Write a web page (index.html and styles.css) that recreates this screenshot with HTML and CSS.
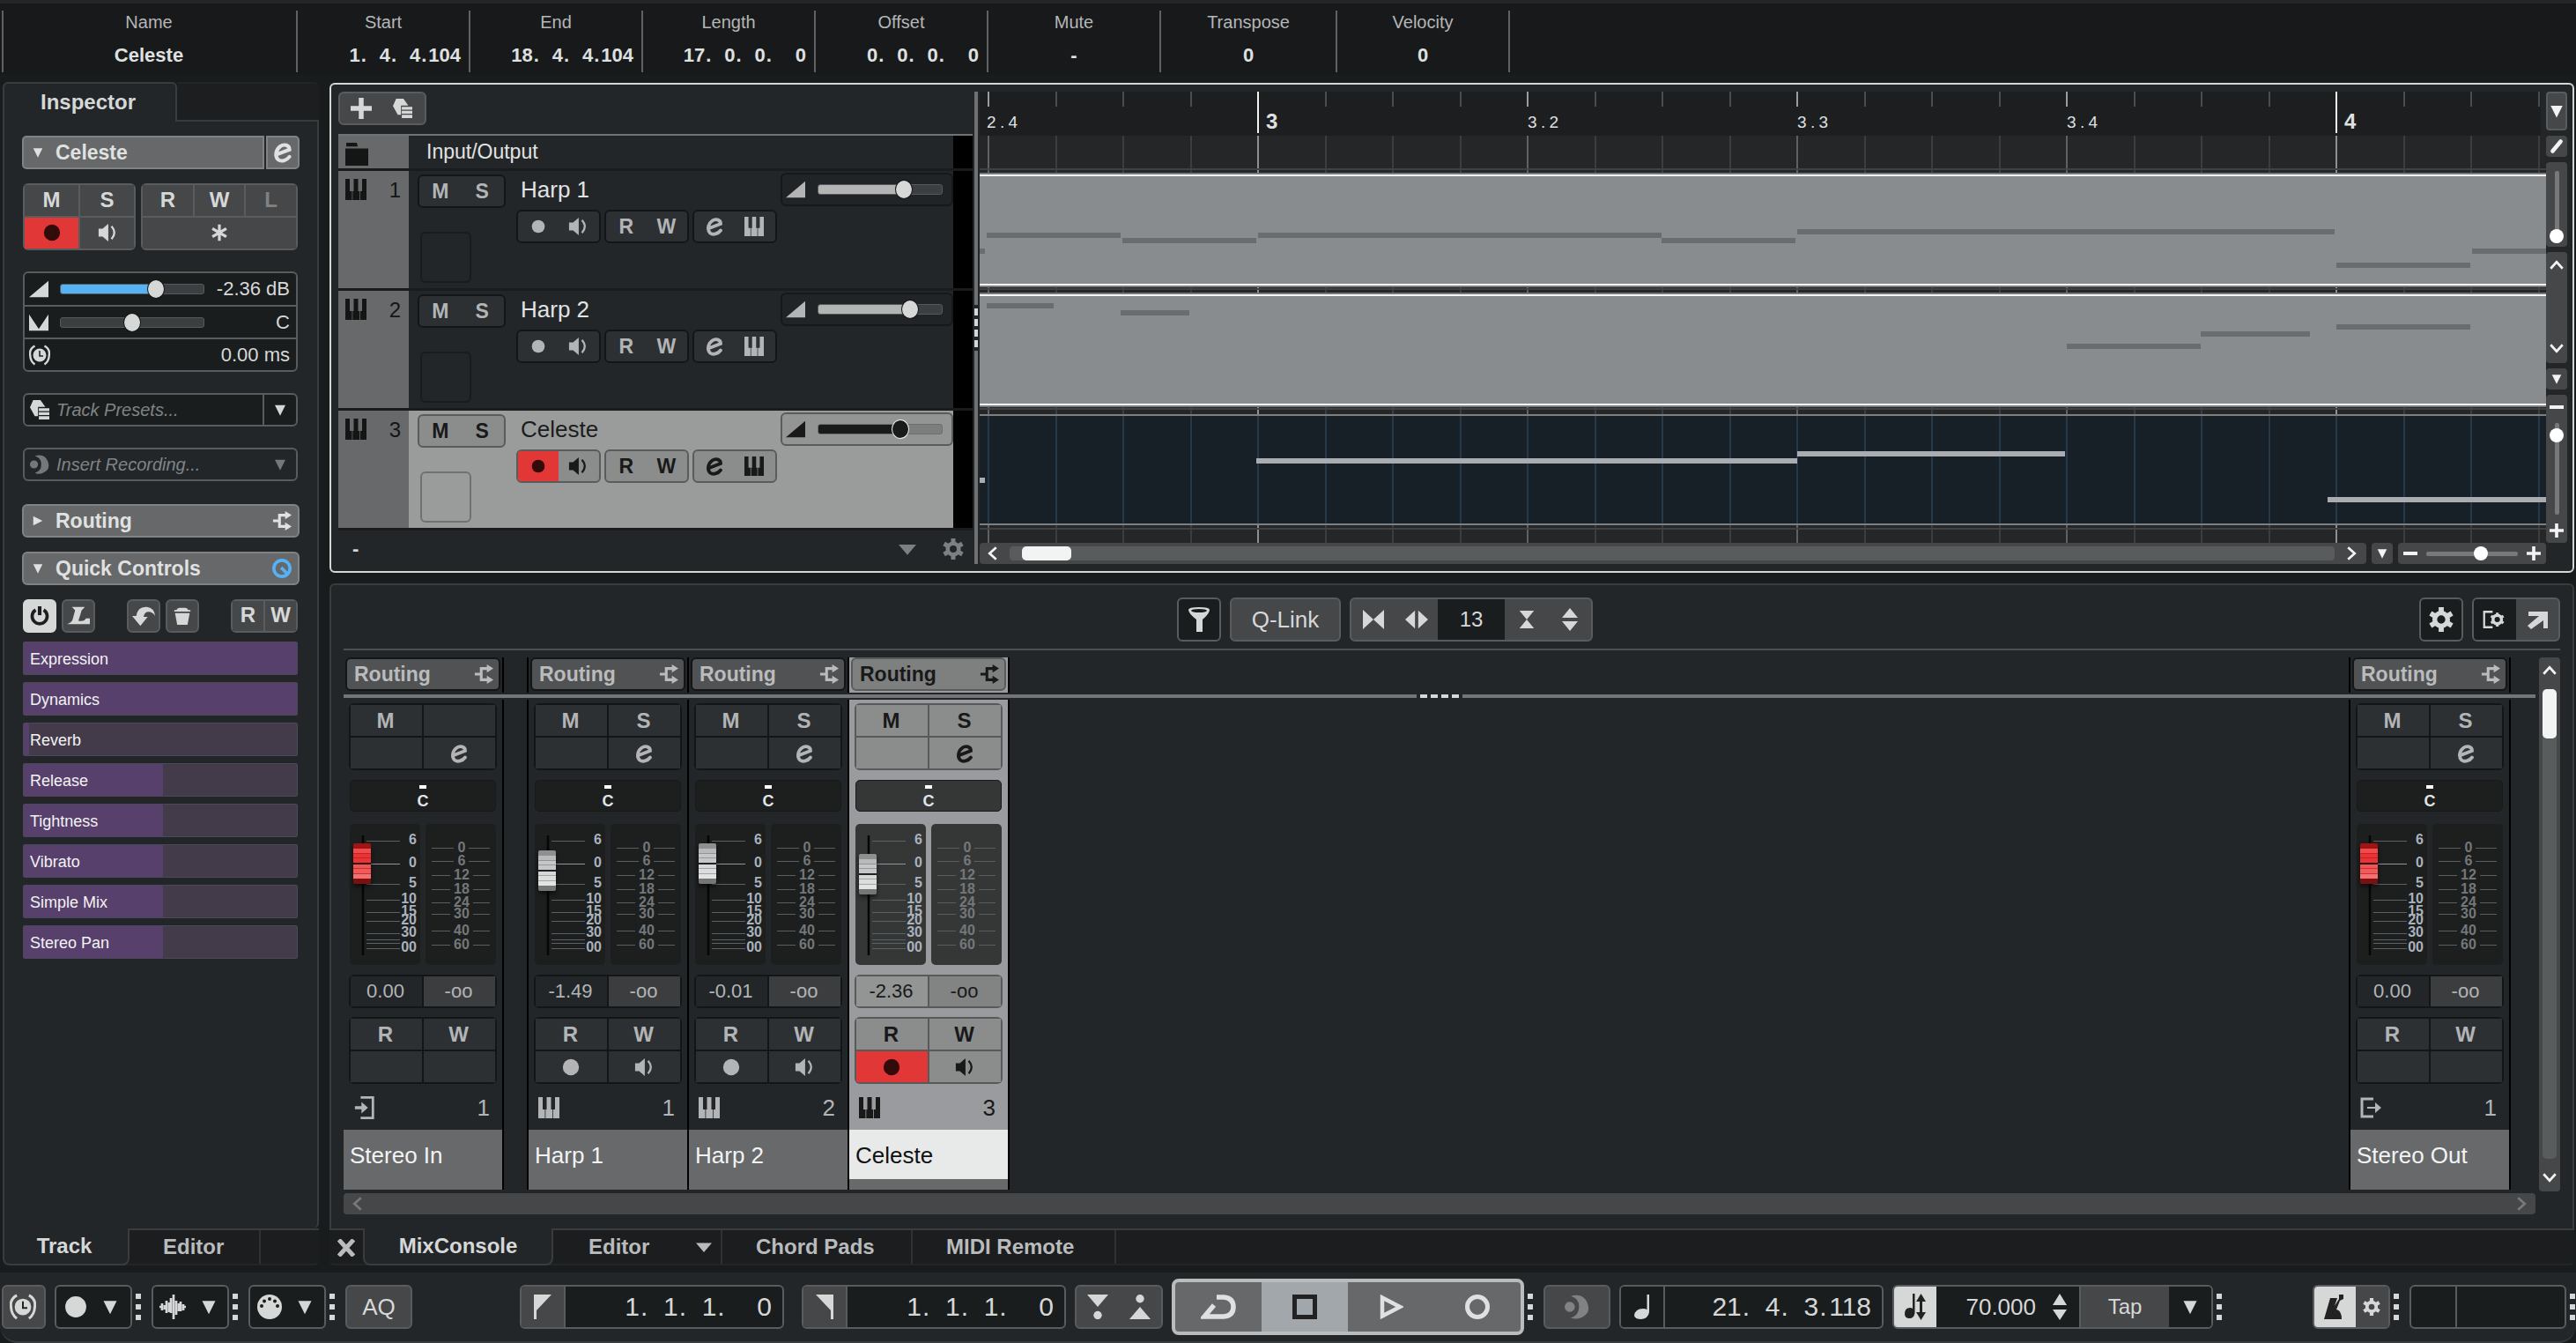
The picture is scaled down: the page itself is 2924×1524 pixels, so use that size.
FILE: index.html
```html
<!DOCTYPE html>
<html lang="en">
<head>
<meta charset="utf-8">
<title>Project</title>
<link rel="stylesheet" href="styles.css">
</head>
<body>
<svg class="sprite" aria-hidden="true">
  <symbol id="down" viewBox="0 0 24 24"><path d="M3 4h18L12 22z"/></symbol>
  <symbol id="flat" viewBox="0 0 24 24"><path d="M0 6h24L12 20z"/></symbol>
  <symbol id="right" viewBox="0 0 24 24"><path d="M3 3v18l18-9z"/></symbol>
  <symbol id="edit" viewBox="0 0 24 24"><path d="M6 14 19 9C19 4 13 3 9.500 5.500 4.500 9 3.500 16 7 19.500 10.500 22 16 20.500 19 16.500" fill="none" stroke="currentColor" stroke-width="3.800" stroke-linecap="round"/></symbol>
  <symbol id="keys" viewBox="0 0 24 24"><path d="M0 0h5v14h2.500v10H0zM9.500 0h5v14h1.500v10H8.300V14h1.200zM19 0h5v24h-7.200V14H19z"/></symbol>
  <symbol id="speaker" viewBox="0 0 24 24"><path d="M1 7h5l7-6v22l-7-6H1z"/><path d="M17 4q7 8 0 16" fill="none" stroke="currentColor" stroke-width="2.500"/></symbol>
  <symbol id="dot" viewBox="0 0 24 24"><circle cx="12" cy="12" r="11"/></symbol>
  <symbol id="route" viewBox="0 0 24 24"><path d="M1 12h7M18 5H9v14h9" fill="none" stroke="currentColor" stroke-width="3.400"/><path d="M16 0l8 5-8 5zM16 14l8 5-8 5z"/></symbol>
  <symbol id="gear" viewBox="0 0 24 24"><circle cx="12" cy="12" r="6.300" fill="none" stroke="currentColor" stroke-width="4.600"/><path d="M12 0v5M12 19v5M1.600 6l4.300 2.500M18.100 15.500l4.300 2.500M1.600 18l4.300-2.500M18.100 8.500 22.400 6" stroke="currentColor" stroke-width="5"/></symbol>
  <symbol id="fade" viewBox="0 0 24 24"><path d="M0 22 24 2v20z"/></symbol>
  <symbol id="pan" viewBox="0 0 24 24"><path d="M0 2l12 18L24 2v20H0z"/></symbol>
  <symbol id="clock" viewBox="0 0 24 24"><circle cx="12" cy="12" r="7.500"/><path d="M12 7v6h4" fill="none" stroke="#222" stroke-width="1.600"/><path d="M6.500 1.500Q0 5 1.200 12 1.500 19 6.500 22.500M17.500 1.500Q24 5 22.800 12 22.500 19 17.500 22.500" fill="none" stroke="currentColor" stroke-width="2.400"/></symbol>
  <symbol id="preset" viewBox="0 0 24 24"><path d="M4 0h9l6 8.500H10V20H6L0 9z"/><path d="M11 10h13v3.600H11zM11 15h13v3.600H11zM11 20h13v4H11z"/></symbol>
  <symbol id="moon" viewBox="0 0 24 24"><circle cx="5" cy="12" r="5"/><path d="M6 1.500Q18-2 22 8t-5 14q-6 3-11 .5 8-2 8-10.500T6 1.500z"/></symbol>
  <symbol id="star" viewBox="0 0 24 24"><path d="M12 1v22M2.500 6.500l19 11M21.500 6.500l-19 11" stroke="currentColor" stroke-width="3.800"/></symbol>
  <symbol id="power" viewBox="0 0 24 24"><path d="M7 4.500A9.300 9.300 0 1 0 17 4.500" fill="none" stroke="currentColor" stroke-width="4"/><path d="M12 0v11" stroke="currentColor" stroke-width="4.500"/></symbol>
  <symbol id="learn" viewBox="0 0 28 24"><path d="M6 1h16l-4 4-4 13q8 1 9-3h5v7H0q6-2 7-6l3-11z"/></symbol>
  <symbol id="undo" viewBox="0 0 28 24"><path d="M0 12h5Q7 0 18 1q9 1 10 11-3-5-8-5-5 0-6 6h5l-9 11z"/></symbol>
  <symbol id="trash" viewBox="0 0 24 24"><path d="M1 4h3q1-3 4-3h8q3 0 4 3h3v2H1zM2 8h20l-3 16H5z"/></symbol>
  <symbol id="plus" viewBox="0 0 24 24"><path d="M12 0v24M0 12h24" stroke="currentColor" stroke-width="5.500"/></symbol>
  <symbol id="minus" viewBox="0 0 24 24"><path d="M0 12h24" stroke="currentColor" stroke-width="6"/></symbol>
  <symbol id="folder" viewBox="0 0 24 24"><path d="M0 6h24v18H0zM1 0h11l1 4H1z"/></symbol>
  <symbol id="chev" viewBox="0 0 24 24"><path d="M3 17l9-10 9 10" fill="none" stroke="currentColor" stroke-width="3.600"/></symbol>
  <symbol id="pencil" viewBox="0 0 24 24"><path d="M7 18 17 6" stroke="currentColor" stroke-width="5" stroke-linecap="round"/></symbol>
  <symbol id="funnel" viewBox="0 0 24 28"><path d="M0 3Q0 0 12 0t12 3q0 4-8 11v14h-7V14Q0 7 0 3z"/><ellipse cx="12" cy="4" rx="9" ry="2" fill="#1a1d1e"/></symbol>
  <symbol id="narrow" viewBox="0 0 24 24"><path d="M0 1v22l12-11zM24 1v22L12 12z"/></symbol>
  <symbol id="widen" viewBox="0 0 28 24"><path d="M12 1v22L0 12zM16 1v22l12-11z"/></symbol>
  <symbol id="glass" viewBox="0 0 18 24"><path d="M0 1h18L9 12zM0 23h18L9 12z"/></symbol>
  <symbol id="updown" viewBox="0 0 18 26"><path d="M0 11h18L9 0zM0 15h18L9 26z"/></symbol>
  <symbol id="winset" viewBox="0 0 32 24"><path d="M13 2H2v20h11" fill="none" stroke="currentColor" stroke-width="2.600"/><circle cx="19" cy="12" r="5.500" fill="none" stroke="currentColor" stroke-width="4"/><path d="M19 3v3M19 18v3M11 7.500l3 2M24 14.500l3 2M11 16.500l3-2M24 9.500l3-2" stroke="currentColor" stroke-width="3.500"/></symbol>
  <symbol id="popout" viewBox="0 0 24 24"><path d="M2 3h22v19h-5v-9L5 23 1 19 14 8H2z"/></symbol>
  <symbol id="input" viewBox="0 0 24 28"><path d="M7 1.500h15v25H7" fill="none" stroke="currentColor" stroke-width="3"/><path d="M0 12h8V7l8 7-8 7v-5H0z"/></symbol>
  <symbol id="output" viewBox="0 0 24 24"><path d="M15 2H2v20h13" fill="none" stroke="currentColor" stroke-width="3"/><path d="M8 11h9V6l7 6-7 6v-5H8z"/></symbol>
  <symbol id="wave" viewBox="0 0 30 28"><path d="M0 14h2M3 10v8M6 12v5M8 7v14M11 9v11M13 4v17M16 0v28M19 7v16M22 10v9M24 8v11M27 11v7M28 14h2" stroke="currentColor" stroke-width="2.700"/></symbol>
  <symbol id="midi" viewBox="0 0 28 28"><circle cx="14" cy="14" r="14"/><g fill="#1a1d1e"><circle cx="5" cy="13" r="2"/><circle cx="8" cy="7.500" r="2"/><circle cx="14" cy="5" r="2"/><circle cx="20" cy="7.500" r="2"/><circle cx="23" cy="13" r="2"/></g></symbol>
  <symbol id="flagl" viewBox="0 0 20 28"><path d="M0 0h20L3 18v10H0z"/></symbol>
  <symbol id="flagr" viewBox="0 0 20 28"><path d="M20 0H0l17 18v10h3z"/></symbol>
  <symbol id="nudgel" viewBox="0 0 24 28"><path d="M0 0h24L12 14z"/><circle cx="12" cy="23.500" r="4.700"/></symbol>
  <symbol id="nudger" viewBox="0 0 24 28"><path d="M0 28h24L12 14z"/><circle cx="12" cy="4.700" r="4.700"/></symbol>
  <symbol id="cycle" viewBox="0 0 40 28"><path d="M18 3h8q11 1 11 11t-11 11H4l11-13" fill="none" stroke="currentColor" stroke-width="5.500"/></symbol>
  <symbol id="stop" viewBox="0 0 28 28"><path d="M2.500 2.500h23v23h-23z" fill="none" stroke="currentColor" stroke-width="5"/></symbol>
  <symbol id="play" viewBox="0 0 28 28"><path d="M4 3.500v21L24 14z" fill="none" stroke="currentColor" stroke-width="4.500"/></symbol>
  <symbol id="record" viewBox="0 0 28 28"><circle cx="14" cy="14" r="11.500" fill="none" stroke="currentColor" stroke-width="5"/></symbol>
  <symbol id="note" viewBox="0 0 18 28"><path d="M14.500 0H17v20q-1 7-9 8-7 0-8-4 1-8 10-8 3 0 4.500 1z"/></symbol>
  <symbol id="tempo" viewBox="0 0 24 30"><path d="M9 0h2.500v22q-1 6-6 6Q0 28 0 23q0-7 6-7 2 0 3 1z"/><path d="M18.500 0 24 9h-4v12h4l-5.500 9L13 21h4V9h-4z"/></symbol>
  <symbol id="spin" viewBox="0 0 16 30"><path d="M0 13h16L8 0zM0 18h16L8 30z"/></symbol>
  <symbol id="metro" viewBox="0 0 24 28"><path d="M7 4h8l-3 9 5-8V0h5v5l-4 2-4 10q6 1 6 11H0z"/></symbol>
  <symbol id="fticks" viewBox="0 0 80 160"><path d="M15 13v136" stroke="#050606" stroke-width="2.500"/><path d="M19 19.500h38M19 68.500h38M19 86.500h38M19 100.500h38M19 110.500h38M19 124.500h38M19 131.500h38M19 135.500h38M19 141.500h38" stroke="#5a6167"/><path d="M19 45.500h38" stroke="#8d95a0"/></symbol>
  <symbol id="mticks" viewBox="0 0 80 160"><path d="M7 27.500h25M49 27.500h24M7 42.500h25M49 42.500h24M7 58.500h21M54 58.500h19M7 74.500h21M54 74.500h19M7 89.500h21M54 89.500h19M7 102.500h21M54 102.500h19M7 121.500h21M54 121.500h19M7 137.500h21M54 137.500h19" stroke="#5a5d60"/></symbol>
</svg>

<dl class="info">
  <div class="field name"><dt>Name</dt><dd>Celeste</dd></div>
  <div class="field"><dt>Start</dt><dd class="pos">1<i class="m">.</i>4<i class="m">.</i>4<i class="s">.</i>104</dd></div>
  <div class="field"><dt>End</dt><dd class="pos">18<i class="m">.</i>4<i class="m">.</i>4<i class="s">.</i>104</dd></div>
  <div class="field"><dt>Length</dt><dd class="pos">17<i class="m">.</i>0<i class="m">.</i>0<i class="l">.</i>0</dd></div>
  <div class="field"><dt>Offset</dt><dd class="pos">0<i class="m">.</i>0<i class="m">.</i>0<i class="l">.</i>0</dd></div>
  <div class="field"><dt>Mute</dt><dd>-</dd></div>
  <div class="field wider"><dt>Transpose</dt><dd>0</dd></div>
  <div class="field"><dt>Velocity</dt><dd>0</dd></div>
</dl>

<main class="zones">
  <aside class="inspector">
    <div class="toptabs"><button class="toptab">Inspector</button><span class="toprest"></span></div>
    <div class="inspbody">
      <div class="head split"><button class="headmain"><svg class="i14"><use href="#down"/></svg>Celeste</button><button class="heade" aria-label="Edit"><svg class="i26"><use href="#edit"/></svg></button></div>
      <div class="statebox">
        <div class="btns two"><button>M</button><button>S</button><button class="armed" aria-label="Record"><svg class="i20"><use href="#dot"/></svg></button><button aria-label="Monitor"><svg class="i22"><use href="#speaker"/></svg></button></div>
        <div class="btns three"><button>R</button><button>W</button><button class="off">L</button><button class="wide" aria-label="Freeze"><svg class="i20"><use href="#star"/></svg></button></div>
      </div>
      <div class="levels">
        <label class="level"><svg class="i22"><use href="#fade"/></svg><input class="slider blue" type="range" aria-label="Volume" min="0" max="1000" value="688" style="--fill:66%"><output>-2.36 dB</output></label>
        <label class="level"><svg class="i22"><use href="#pan"/></svg><input class="slider" type="range" aria-label="Pan" min="0" max="1000" value="500" style="--fill:0%"><output>C</output></label>
        <div class="level"><svg class="i24"><use href="#clock"/></svg><output>0.00 ms</output></div>
      </div>
      <button class="drop"><svg class="i22"><use href="#preset"/></svg><em>Track Presets...</em><span class="arrow"><svg class="i16"><use href="#down"/></svg></span></button>
      <button class="drop dim"><svg class="i22"><use href="#moon"/></svg><em>Insert Recording...</em><span class="arrow"><svg class="i16"><use href="#down"/></svg></span></button>
      <button class="head single first"><svg class="i14"><use href="#right"/></svg>Routing<svg class="i22 end"><use href="#route"/></svg></button>
      <button class="head single"><svg class="i14"><use href="#down"/></svg>Quick Controls<svg class="i22 end q" viewBox="0 0 24 24"><circle cx="12" cy="12" r="10" fill="none" stroke="currentColor" stroke-width="4"/><path d="M11 11l7 7" stroke="currentColor" stroke-width="4"/></svg></button>
      <div class="qtools">
        <button class="tool lit" aria-label="Power"><svg class="i22"><use href="#power"/></svg></button>
        <button class="tool" aria-label="Learn"><svg class="i26"><use href="#learn"/></svg></button>
        <span class="push"></span>
        <button class="tool" aria-label="Undo"><svg class="i26"><use href="#undo"/></svg></button>
        <button class="tool" aria-label="Delete"><svg class="i20"><use href="#trash"/></svg></button>
        <span class="push"></span>
        <div class="btns pair"><button>R</button><button>W</button></div>
      </div>
      <ul class="quick">
        <li style="--v:100%">Expression</li>
        <li style="--v:100%">Dynamics</li>
        <li style="--v:2%">Reverb</li>
        <li style="--v:51%">Release</li>
        <li style="--v:51%">Tightness</li>
        <li style="--v:51%">Vibrato</li>
        <li style="--v:51%">Simple Mix</li>
        <li style="--v:51%">Stereo Pan</li>
      </ul>
    </div>
    <nav class="tabs"><a href="#" class="tab on t1">Track</a><a href="#" class="tab t2">Editor</a></nav>
  </aside>

  <div class="center">
    <section class="project">
      <div class="tracks">
        <div class="addbar"><button aria-label="Add track"><svg class="i24"><use href="#plus"/></svg></button><button aria-label="Track preset"><svg class="i22"><use href="#preset"/></svg></button></div>
        <div class="track folder"><div class="num"><svg class="i26"><use href="#folder"/></svg></div><div class="tbody"><span>Input/Output</span></div><span class="meter"></span></div>
        <div class="track">
          <div class="num"><svg class="i24"><use href="#keys"/></svg><span>1</span></div>
          <div class="tbody">
            <div class="tleft"><div class="pill"><button>M</button><button>S</button></div><span class="pic"></span></div>
            <div class="tmid"><span class="tname">Harp 1</span><div class="pills"><div class="pill"><button aria-label="Record"><svg class="i16"><use href="#dot"/></svg></button><button aria-label="Monitor"><svg class="i22"><use href="#speaker"/></svg></button></div><div class="pill"><button>R</button><button>W</button></div><div class="pill"><button aria-label="Edit"><svg class="i24"><use href="#edit"/></svg></button><button aria-label="Instrument"><svg class="i22"><use href="#keys"/></svg></button></div></div></div>
            <label class="tvol"><svg class="i22"><use href="#fade"/></svg><input class="slider" type="range" aria-label="Harp 1 volume" min="0" max="1000" value="721" style="--fill:69%"></label>
          </div><span class="meter"></span>
        </div>
        <div class="track">
          <div class="num"><svg class="i24"><use href="#keys"/></svg><span>2</span></div>
          <div class="tbody">
            <div class="tleft"><div class="pill"><button>M</button><button>S</button></div><span class="pic"></span></div>
            <div class="tmid"><span class="tname">Harp 2</span><div class="pills"><div class="pill"><button aria-label="Record"><svg class="i16"><use href="#dot"/></svg></button><button aria-label="Monitor"><svg class="i22"><use href="#speaker"/></svg></button></div><div class="pill"><button>R</button><button>W</button></div><div class="pill"><button aria-label="Edit"><svg class="i24"><use href="#edit"/></svg></button><button aria-label="Instrument"><svg class="i22"><use href="#keys"/></svg></button></div></div></div>
            <label class="tvol"><svg class="i22"><use href="#fade"/></svg><input class="slider" type="range" aria-label="Harp 2 volume" min="0" max="1000" value="787" style="--fill:75%"></label>
          </div><span class="meter"></span>
        </div>
        <div class="track sel">
          <div class="num"><svg class="i24"><use href="#keys"/></svg><span>3</span></div>
          <div class="tbody">
            <div class="tleft"><div class="pill"><button>M</button><button>S</button></div><span class="pic"></span></div>
            <div class="tmid"><span class="tname">Celeste</span><div class="pills"><div class="pill"><button class="armed" aria-label="Record"><svg class="i16"><use href="#dot"/></svg></button><button aria-label="Monitor"><svg class="i22"><use href="#speaker"/></svg></button></div><div class="pill"><button>R</button><button>W</button></div><div class="pill"><button aria-label="Edit"><svg class="i24"><use href="#edit"/></svg></button><button aria-label="Instrument"><svg class="i22"><use href="#keys"/></svg></button></div></div></div>
            <label class="tvol"><svg class="i22"><use href="#fade"/></svg><input class="slider dark" type="range" aria-label="Celeste volume" min="0" max="1000" value="688" style="--fill:66%"></label>
          </div><span class="meter"></span>
        </div>
        <div class="tfoot"><span>-</span><svg class="i20 end"><use href="#flat"/></svg><svg class="i24"><use href="#gear"/></svg></div>
      </div>
      <div class="vsplit"><span></span><b></b><b></b><b></b><b></b><span class="tail"></span></div>
      <div class="timeline">
        <div class="ruler">
          <span class="beat" style="left:8px">2<i>.</i>4</span>
          <strong class="bar" style="left:315px">3</strong>
          <span class="beat" style="left:622px">3<i>.</i>2</span>
          <span class="beat" style="left:928px">3<i>.</i>3</span>
          <span class="beat" style="left:1234px">3<i>.</i>4</span>
          <strong class="bar" style="left:1539px">4</strong>
        </div>
        <div class="arrange">
          <span class="barline" style="left:315px"></span><span class="barline" style="left:1539px"></span>
          <div class="lane io"></div>
          <div class="lane"><div class="clip">
            <i style="left:0;top:85px;width:6px"></i><i style="left:8px;top:67px;width:152px"></i><i style="left:162px;top:73px;width:152px"></i><i style="left:316px;top:67px;width:458px"></i><i style="left:774px;top:73px;width:152px"></i><i style="left:928px;top:63px;width:610px"></i><i style="left:1540px;top:101px;width:152px"></i><i style="left:1694px;top:85px;width:84px"></i>
          </div></div>
          <div class="lane"><div class="clip">
            <i style="left:8px;top:11px;width:76px"></i><i style="left:160px;top:19px;width:78px"></i><i style="left:1234px;top:57px;width:152px"></i><i style="left:1386px;top:43px;width:124px"></i><i style="left:1540px;top:35px;width:152px"></i>
          </div></div>
          <div class="lane"><div class="clip open">
            <i style="left:0;top:71px;width:6px"></i><i style="left:314px;top:49px;width:614px"></i><i style="left:928px;top:41px;width:304px"></i><i style="left:1530px;top:93px;width:248px"></i>
          </div></div>
        </div>
        <div class="hrow">
          <div class="hscroll"><svg class="i18 cl"><use href="#chev"/></svg><div class="htrack"><span></span></div><svg class="i18 cr"><use href="#chev"/></svg></div>
          <button class="mini" aria-label="Zoom presets"><svg class="i14"><use href="#down"/></svg></button>
          <div class="hzoom"><svg class="i16"><use href="#minus"/></svg><input class="zoom" type="range" aria-label="Horizontal zoom" min="0" max="100" value="61"><svg class="i16"><use href="#plus"/></svg></div>
        </div>
      </div>
      <div class="vcol">
        <button class="mini tall" aria-label="Divide"><svg class="i18"><use href="#down"/></svg></button>
        <button class="mini" aria-label="Draw"><svg class="i22"><use href="#pencil"/></svg></button>
        <div class="vbox v1"><input class="zoom vert" type="range" aria-label="Waveform zoom" min="0" max="100" value="0"></div>
        <div class="vbox v2"><svg class="i18"><use href="#chev"/></svg><svg class="i18 flip"><use href="#chev"/></svg></div>
        <button class="mini" aria-label="Track heights"><svg class="i14"><use href="#down"/></svg></button>
        <div class="vbox v3"><svg class="i16"><use href="#minus"/></svg><input class="zoom vert" type="range" aria-label="Vertical zoom" min="0" max="100" value="93"><svg class="i16"><use href="#plus"/></svg></div>
      </div>
    </section>

    <section class="mixer">
      <div class="mixbar">
        <div class="mixtools">
          <button class="mbtn w50 deep" aria-label="Filter"><svg class="i28"><use href="#funnel"/></svg></button>
          <button class="mbtn w126">Q-Link</button>
          <div class="mgroup"><button aria-label="Narrower"><svg class="i24"><use href="#narrow"/></svg></button><button aria-label="Wider"><svg class="i26"><use href="#widen"/></svg></button><output>13</output><button aria-label="Lower"><svg class="i22"><use href="#glass"/></svg></button><button aria-label="Higher"><svg class="i26"><use href="#updown"/></svg></button></div>
        </div>
        <div class="mixright">
          <button class="mbtn w50 deep" aria-label="Settings"><svg class="i28"><use href="#gear"/></svg></button>
          <div class="mgroup"><button class="deep" aria-label="Window layout"><svg class="i28"><use href="#winset"/></svg></button><button aria-label="Open window"><svg class="i24"><use href="#popout"/></svg></button></div>
        </div>
      </div>
      <div class="mixmain">
        <div class="desk">
          <div class="racks">
            <div class="strip in"><button class="rout">Routing<svg class="i22 end"><use href="#route"/></svg></button></div>
            <div class="strip lead"><button class="rout">Routing<svg class="i22 end"><use href="#route"/></svg></button></div>
            <div class="strip"><button class="rout">Routing<svg class="i22 end"><use href="#route"/></svg></button></div>
            <div class="strip sel"><button class="rout">Routing<svg class="i22 end"><use href="#route"/></svg></button></div>
            <div class="strip lead out"><button class="rout">Routing<svg class="i22 end"><use href="#route"/></svg></button></div>
          </div>
          <div class="hsplit"><span></span><b></b><b></b><b></b><b></b><span class="tail"></span></div>
          <div class="channels">
            <article class="strip in">
              <div class="quad"><button>M</button><span></span><span></span><button aria-label="Edit"><svg class="i24"><use href="#edit"/></svg></button></div>
              <div class="panbox"><b></b>C</div>
              <div class="faders">
                <div class="fader"><svg class="ticks"><use href="#fticks"/></svg><ol class="scale"><li>6</li><li>0</li><li>5</li><li>10</li><li>15</li><li>20</li><li>30</li><li>00</li></ol><input class="cap red" type="range" aria-label="Stereo In level" min="0" max="90" value="80"></div>
                <div class="vu"><svg class="ticks"><use href="#mticks"/></svg><ol class="scale"><li>0</li><li>6</li><li>12</li><li>18</li><li>24</li><li>30</li><li>40</li><li>60</li></ol></div>
              </div>
              <div class="vals"><output>0.00</output><output>-oo</output></div>
              <div class="quad"><button>R</button><button>W</button><span></span><span></span></div>
              <div class="ident"><svg class="i26"><use href="#input"/></svg><span>1</span></div>
              <h3>Stereo In</h3>
            </article>
            <article class="strip lead">
              <div class="quad"><button>M</button><button>S</button><span></span><button aria-label="Edit"><svg class="i24"><use href="#edit"/></svg></button></div>
              <div class="panbox"><b></b>C</div>
              <div class="faders">
                <div class="fader"><svg class="ticks"><use href="#fticks"/></svg><ol class="scale"><li>6</li><li>0</li><li>5</li><li>10</li><li>15</li><li>20</li><li>30</li><li>00</li></ol><input class="cap" type="range" aria-label="Harp 1 level" min="0" max="90" value="72"></div>
                <div class="vu"><svg class="ticks"><use href="#mticks"/></svg><ol class="scale"><li>0</li><li>6</li><li>12</li><li>18</li><li>24</li><li>30</li><li>40</li><li>60</li></ol></div>
              </div>
              <div class="vals"><output>-1.49</output><output>-oo</output></div>
              <div class="quad"><button>R</button><button>W</button><button aria-label="Record"><svg class="i20"><use href="#dot"/></svg></button><button aria-label="Monitor"><svg class="i22"><use href="#speaker"/></svg></button></div>
              <div class="ident"><svg class="i24"><use href="#keys"/></svg><span>1</span></div>
              <h3>Harp 1</h3>
            </article>
            <article class="strip">
              <div class="quad"><button>M</button><button>S</button><span></span><button aria-label="Edit"><svg class="i24"><use href="#edit"/></svg></button></div>
              <div class="panbox"><b></b>C</div>
              <div class="faders">
                <div class="fader"><svg class="ticks"><use href="#fticks"/></svg><ol class="scale"><li>6</li><li>0</li><li>5</li><li>10</li><li>15</li><li>20</li><li>30</li><li>00</li></ol><input class="cap" type="range" aria-label="Harp 2 level" min="0" max="90" value="80"></div>
                <div class="vu"><svg class="ticks"><use href="#mticks"/></svg><ol class="scale"><li>0</li><li>6</li><li>12</li><li>18</li><li>24</li><li>30</li><li>40</li><li>60</li></ol></div>
              </div>
              <div class="vals"><output>-0.01</output><output>-oo</output></div>
              <div class="quad"><button>R</button><button>W</button><button aria-label="Record"><svg class="i20"><use href="#dot"/></svg></button><button aria-label="Monitor"><svg class="i22"><use href="#speaker"/></svg></button></div>
              <div class="ident"><svg class="i24"><use href="#keys"/></svg><span>2</span></div>
              <h3>Harp 2</h3>
            </article>
            <article class="strip sel">
              <div class="quad"><button>M</button><button>S</button><span></span><button aria-label="Edit"><svg class="i24"><use href="#edit"/></svg></button></div>
              <div class="panbox"><b></b>C</div>
              <div class="faders">
                <div class="fader"><svg class="ticks"><use href="#fticks"/></svg><ol class="scale"><li>6</li><li>0</li><li>5</li><li>10</li><li>15</li><li>20</li><li>30</li><li>00</li></ol><input class="cap" type="range" aria-label="Celeste level" min="0" max="90" value="68"></div>
                <div class="vu"><svg class="ticks"><use href="#mticks"/></svg><ol class="scale"><li>0</li><li>6</li><li>12</li><li>18</li><li>24</li><li>30</li><li>40</li><li>60</li></ol></div>
              </div>
              <div class="vals"><output>-2.36</output><output>-oo</output></div>
              <div class="quad"><button>R</button><button>W</button><button class="armed" aria-label="Record"><svg class="i20"><use href="#dot"/></svg></button><button aria-label="Monitor"><svg class="i22"><use href="#speaker"/></svg></button></div>
              <div class="ident"><svg class="i24"><use href="#keys"/></svg><span>3</span></div>
              <h3>Celeste</h3>
            </article>
            <article class="strip lead out">
              <div class="quad"><button>M</button><button>S</button><span></span><button aria-label="Edit"><svg class="i24"><use href="#edit"/></svg></button></div>
              <div class="panbox"><b></b>C</div>
              <div class="faders">
                <div class="fader"><svg class="ticks"><use href="#fticks"/></svg><ol class="scale"><li>6</li><li>0</li><li>5</li><li>10</li><li>15</li><li>20</li><li>30</li><li>00</li></ol><input class="cap red" type="range" aria-label="Stereo Out level" min="0" max="90" value="80"></div>
                <div class="vu"><svg class="ticks"><use href="#mticks"/></svg><ol class="scale"><li>0</li><li>6</li><li>12</li><li>18</li><li>24</li><li>30</li><li>40</li><li>60</li></ol></div>
              </div>
              <div class="vals"><output>0.00</output><output>-oo</output></div>
              <div class="quad"><button>R</button><button>W</button><span></span><span></span></div>
              <div class="ident"><svg class="i24"><use href="#output"/></svg><span>1</span></div>
              <h3>Stereo Out</h3>
            </article>
          </div>
          <div class="deskscroll"><svg class="i18 cl"><use href="#chev"/></svg><svg class="i18 cr end"><use href="#chev"/></svg></div>
        </div>
        <div class="vscroll"><svg class="i18"><use href="#chev"/></svg><div class="vtrack"><span></span></div><svg class="i18 flip"><use href="#chev"/></svg></div>
      </div>
    </section>
    <nav class="tabs">
      <button class="close" aria-label="Close"><svg class="i20" viewBox="0 0 24 24"><path d="M2 1l20 22M22 1 2 23" stroke="currentColor" stroke-width="6"/></svg></button>
      <a href="#" class="tab on m1">MixConsole</a><a href="#" class="tab m2">Editor<svg class="i18 end"><use href="#flat"/></svg></a><a href="#" class="tab m3">Chord Pads</a><a href="#" class="tab m4">MIDI Remote</a>
    </nav>
  </div>
</main>

<footer class="transport">
  <button class="box gray w50" aria-label="Constrain delay"><svg class="i30"><use href="#clock"/></svg></button>
  <button class="box w88" aria-label="Record mode"><svg class="i26"><use href="#dot"/></svg><svg class="i20"><use href="#down"/></svg></button><span class="dots"></span>
  <button class="box w88" aria-label="Audio record mode"><svg class="i30"><use href="#wave"/></svg><svg class="i20"><use href="#down"/></svg></button><span class="dots"></span>
  <button class="box w88" aria-label="MIDI record mode"><svg class="i28"><use href="#midi"/></svg><svg class="i20"><use href="#down"/></svg></button><span class="dots"></span>
  <button class="box gray aq">AQ</button>
  <div class="locator left"><button aria-label="Left locator"><svg class="i28"><use href="#flagl"/></svg></button><output class="pos">1<i class="m">.</i>1<i class="m">.</i>1<i class="l">.</i>0</output></div>
  <div class="locator"><button aria-label="Right locator"><svg class="i28"><use href="#flagr"/></svg></button><output class="pos">1<i class="m">.</i>1<i class="m">.</i>1<i class="l">.</i>0</output></div>
  <button class="box gray punch" aria-label="Punch points"><svg class="i28"><use href="#nudgel"/></svg><svg class="i28"><use href="#nudger"/></svg></button>
  <div class="keysbox"><button aria-label="Cycle"><svg class="w40"><use href="#cycle"/></svg></button><button class="active" aria-label="Stop"><svg class="i28"><use href="#stop"/></svg></button><button aria-label="Play"><svg class="i28"><use href="#play"/></svg></button><button aria-label="Record"><svg class="i28"><use href="#record"/></svg></button></div><span class="dots"></span>
  <button class="box gray retro" aria-label="Retrospective record"><svg class="i28"><use href="#moon"/></svg></button>
  <div class="locator time"><button class="deep" aria-label="Time format"><svg class="i28"><use href="#note"/></svg></button><output class="pos">21<i class="m">.</i>4<i class="m">.</i>3<i class="s">.</i>118</output></div>
  <div class="locator tempo"><button class="lit" aria-label="Tempo track"><svg class="i30"><use href="#tempo"/></svg></button><output>70.000<svg class="i30"><use href="#spin"/></svg></output><button class="tap">Tap</button><button class="deep" aria-label="Tap options"><svg class="i20"><use href="#down"/></svg></button></div><span class="dots"></span>
  <div class="locator click"><button class="lit" aria-label="Metronome"><svg class="i28"><use href="#metro"/></svg></button><button class="set" aria-label="Metronome settings"><svg class="i20"><use href="#gear"/></svg></button></div><span class="dots"></span>
  <div class="locator load"><span></span><span></span></div><span class="dots last"></span>
</footer>
</body>
</html>
```

FILE: styles.css
```css
* { box-sizing: border-box; }
body {
  margin: 0;
  min-height: 100vh;
  display: flex;
  flex-direction: column;
  background: #191c1d;
  color: #d6d8d8;
  font: 22px "Liberation Sans", Arial, sans-serif;
  overflow-x: hidden;
}
button, input, output { font: inherit; color: inherit; margin: 0; padding: 0; }
button { background: none; border: 0; display: flex; align-items: center; justify-content: center; }
a { color: inherit; text-decoration: none; }
ul, ol, dl, dd, h3 { margin: 0; padding: 0; list-style: none; }
svg { fill: currentColor; flex: none; display: block; }
.sprite { position: absolute; width: 0; height: 0; }
.i14 { width: 14px; height: 14px; }
.i16 { width: 16px; height: 16px; }
.i18 { width: 18px; height: 18px; }
.i20 { width: 20px; height: 20px; }
.i22 { width: 22px; height: 22px; }
.i24 { width: 24px; height: 24px; }
.i26 { width: 26px; height: 26px; }
.i28 { width: 28px; height: 28px; }
.i30 { width: 30px; height: 30px; }
.w40 { width: 40px; height: 28px; }
.end { margin-left: auto; }
.armed { background: #e23737; color: #330b0b; }

/* Position values: fixed cells for the separators */
.pos { display: flex; }
.pos i { font-style: normal; text-indent: 1px; }
.pos .s { width: 9px; }
.pos .m { width: 22px; }
.pos .l { width: 34px; }

/* Info line */
.info { display: flex; height: 84px; padding: 8px 0 2px 2px; background: #18191b; border-top: 4px solid #232629; }
.field { width: 196px; border-right: 2px solid #5f6163; display: flex; flex-direction: column; align-items: center; }
.field.wider { width: 200px; }
.field.name { width: 336px; border-left: 2px solid #5f6163; padding-right: 2px; }
.field dt { font-size: 20px; line-height: 26px; color: #b4b6b7; }
.field dd { font-weight: bold; line-height: 26px; margin-top: 12px; color: #dfe0e0; }
.field .pos { align-self: flex-end; padding-right: 9px; }

.zones { flex: 1; display: flex; gap: 12px; padding: 9px 2px 8px 3px; }

/* Inspector */
.inspector { width: 359px; display: flex; flex-direction: column; }
.toptabs { display: flex; height: 45px; }
.toptab { width: 198px; padding: 0 4px 2px 0; font-size: 24px; font-weight: bold; background: #222629; border: 2px solid #393c3e; border-bottom: 0; border-radius: 6px 6px 0 0; }
.toprest { flex: 1; background: #1d1e20; border-bottom: 2px solid #393c3e; border-top: 2px solid #222527; border-radius: 0 6px 0 0; }
.inspbody { flex: 1; padding: 16px 20px 0 20px; background: #222629; border: 2px solid #393c3e; border-width: 0 2px; border-radius: 0 0 6px 0; }
.head { font-size: 23px; font-weight: bold; color: #e0e1e1; }
.split { display: flex; gap: 2px; height: 38px; }
.headmain, .heade, .single { background: #66686a; border: 2px solid #808284; border-radius: 5px 0 0 5px; }
.headmain { flex: 1; justify-content: flex-start; gap: 13px; padding-left: 9px; }
.heade { width: 38px; border-radius: 0 5px 5px 0; }
.single { width: 100%; height: 38px; border-radius: 6px; padding: 0 7px 0 9px; justify-content: flex-start; gap: 13px; margin-top: 16px; }
.single.first { margin-top: 26px; }
.q { color: #56b1f5; }
.statebox { display: flex; gap: 6px; margin: 16px 2px 0 1px; }
.btns { display: grid; background: #595c5e; gap: 2px; padding: 2px; border-radius: 6px; overflow: hidden; grid-auto-rows: 35px; font-size: 24px; font-weight: bold; }
.btns button { background: #464749; padding-bottom: 2px; }
.btns .armed { background: #e23737; }
.btns .off { color: #808183; }
.two { grid-template-columns: 61px 61px; }
.three { flex: 1; grid-template-columns: repeat(3, 1fr); }
.wide { grid-column: 1 / -1; }
.levels { margin: 24px 2px 0 1px; border: 2px solid #595c5e; border-radius: 6px; background: #1a1d1e; }
.level { display: flex; align-items: center; height: 36px; gap: 13px; padding: 0 7px 0 5px; }
.level + .level { border-top: 2px solid #595c5e; height: 37px; }
.level .slider { width: 164px; }
.level output { margin-left: auto; white-space: nowrap; }
.drop { width: calc(100% - 3px); height: 38px; margin: 24px 2px 0 1px; border: 2px solid #595c5e; border-radius: 6px; background: #1a1d1e; padding-left: 6px; gap: 8px; font-size: 20px; justify-content: flex-start; }
.drop em { color: #808486; }
.arrow { align-self: stretch; width: 38px; margin-left: auto; border-left: 2px solid #595c5e; display: flex; align-items: center; justify-content: center; }
.dim { background: #222629; color: #75787a; }
.dim .arrow { border-color: transparent; }
.qtools { display: flex; gap: 6px; margin: 16px 2px 0 1px; }
.push { flex: 1; }
.tool { width: 38px; height: 38px; border: 2px solid #595c5e; border-radius: 6px; background: #464749; }
.tool.lit { background: #d6d8d8; border-color: #d6d8d8; color: #1d1e20; }
.pair { grid-template-columns: 35px 35px; grid-auto-rows: 34px; }
.quick { margin: 10px 2px 0 1px; display: grid; gap: 8px; font-size: 18px; color: #f2f3f3; }
.quick li { height: 38px; line-height: 38px; padding-left: 7px; border: 1px solid #4d4859; border-radius: 2px; background: linear-gradient(#58406d, #58406d) 0 0 / var(--v) 100% no-repeat #443b4a; }

/* Zone tabs */
.tabs { display: flex; height: 42px; background: #1c1d1f; border-top: 2px solid #393c3e; border-bottom: 2px solid #232628; border-radius: 0 0 6px 6px; font-size: 24px; font-weight: bold; color: #b9bbbc; }
.tab { display: flex; align-items: center; }
.on { background: #222629; color: #d6d8d8; border: 2px solid #393c3e; border-top: 0; border-radius: 0 0 8px 8px; margin: -2px 0 -2px; justify-content: center; }
.t1 { width: 144px; padding-right: 4px; }
.t2 { width: 149px; padding-left: 38px; border-right: 2px solid #2f3234; }
.close { width: 38px; padding-top: 2px; }
.m1 { width: 216px; }
.m2 { width: 192px; padding: 0 10px 0 40px; border-right: 2px solid #2f3234; }
.m3 { width: 216px; padding-left: 38px; border-right: 2px solid #2f3234; }
.m4 { width: 231px; padding-left: 38px; border-right: 2px solid #2f3234; }

.center { flex: 1; min-width: 0; display: flex; flex-direction: column; }

/* Project window */
.project { display: flex; margin-top: 1px; padding: 8px 6px 8px 8px; background: #222629; border: 2px solid #d6d8d8; border-radius: 6px; }
.tracks { width: 720px; }
.addbar { display: flex; width: 100px; height: 38px; margin-bottom: 10px; padding-right: 2px; background: #464749; border: 2px solid #595c5e; border-radius: 6px; }
.addbar button { flex: 1; }
.track { display: flex; height: 136px; border-bottom: 3px solid #191b1c; }
.folder { height: 42px; border-top: 2px solid #707275; }
.num { width: 80px; display: flex; justify-content: space-between; align-items: flex-start; padding: 9px 9px 0 8px; background: #68696b; color: #141515; font-size: 24px; line-height: 26px; }
.folder .num { padding-top: 8px; }
.tbody { flex: 1; display: flex; padding-left: 10px; font-size: 26px; color: #e2e3e3; }
.folder .tbody { padding-left: 20px; font-size: 23px; align-items: center; }
.meter { width: 22px; background: #000; }
.tleft { width: 112px; padding-top: 4px; }
.pill { display: flex; width: 96px; height: 38px; padding-right: 1px; border: 2px solid #131617; border-radius: 6px; background: #2c3033; color: #b2b4b6; font-size: 23px; font-weight: bold; overflow: hidden; }
.tleft .pill { width: 100px; }
.pill button { flex: 1; }
.pic { display: block; width: 58px; height: 58px; margin: 27px 0 0 3px; border: 2px solid #191c1d; border-radius: 6px; }
.tmid { flex: 1; display: flex; flex-direction: column; padding-top: 4px; }
.tname { line-height: 34px; padding-left: 5px; margin-bottom: 6px; }
.pills { display: flex; gap: 4px; }
.tvol { display: flex; align-items: center; width: 196px; height: 38px; margin: 2px 0 0 -100px; padding-left: 4px; gap: 14px; border: 2px solid #16191a; border-radius: 6px; color: #b2b4b6; background: #202426; }
.tvol .slider { width: 142px; }
.sel .tbody { background: #9a9c9c; color: #1b1c1c; }
.sel .pill { background: #8b8d8d; border-color: #5a5c5c; color: #191919; }
.sel .pic { border-color: #6f7171; }
.sel .tvol { background: #939595; border-color: #5a5c5c; color: #191919; }
.tfoot { display: flex; align-items: center; gap: 30px; height: 38px; padding: 4px 10px 0 16px; color: #7d7f81; }
.tfoot span { color: #d6d8d8; font-weight: bold; }

.slider { appearance: none; background: none; height: 20px; }
.slider::-webkit-slider-runnable-track { height: 12px; border: 1px solid #55595a; border-radius: 3px; background: linear-gradient(#b3b5b5, #b3b5b5) 0 0 / var(--fill) 100% no-repeat #3c3f41; }
.slider::-webkit-slider-thumb { appearance: none; width: 20px; height: 22px; margin-top: -6px; border: 1px solid #111; border-radius: 50%; background: #d6d8d8; }
.blue::-webkit-slider-runnable-track { background-image: linear-gradient(#56b1f5, #56b1f5); }
.dark::-webkit-slider-runnable-track { background-image: linear-gradient(#191a1a, #191a1a); background-color: #7c7e7e; border-color: #6d6f6f; }
.dark::-webkit-slider-thumb { background: #191a1a; border-color: #f2f3f3; }

.vsplit { display: flex; flex-direction: column; gap: 4px; width: 4px; margin: 0 2px; }
.vsplit span { height: 242px; background: #6f7173; }
.vsplit b { height: 8px; background: #d6d8d8; }
.vsplit .tail { flex: 1; }

.timeline { flex: 1; min-width: 0; }
.ruler {
  position: relative; height: 50px; margin-right: 6px; overflow: hidden;
  background: linear-gradient(90deg, #9b9c9d 2px, transparent 2px 77px, #4b4c4e 77px 79px, transparent 79px 153px, #4b4c4e 153px 155px, transparent 155px 230px, #4b4c4e 230px 232px, transparent 232px) 9px 0 / 306px 17px repeat-x #1d1e20;
}
.beat, .bar { position: absolute; color: #dfe0e0; }
.beat { top: 25px; font-size: 19px; line-height: 20px; }
.beat i { display: inline-block; width: 14px; text-align: center; font-style: normal; }
.bar { top: 0; height: 47px; border-left: 2px solid #f2f3f3; padding: 20px 0 0 8px; font-size: 24px; line-height: 28px; }
.arrange {
  --a: #606163; --b: #3c3d3f;
  position: relative; height: 462px; overflow: hidden;
  background: linear-gradient(90deg, var(--a) 2px, transparent 2px 77px, var(--b) 77px 79px, transparent 79px 153px, var(--b) 153px 155px, transparent 155px 230px, var(--b) 230px 232px, transparent 232px) 9px 0 / 306px 100% repeat-x #252628;
}
.barline { position: absolute; top: 0; bottom: 0; width: 2px; background: #8f9091; }
.lane { position: relative; height: 136px; padding-top: 3px; border-bottom: 2px solid #404143; }
.lane.io { height: 39px; }
.clip { position: relative; height: 130px; background: #888c8e; border: 2px solid #77797b; border-width: 2px 0; overflow: hidden; box-shadow: inset 0 2px #f8f9fa, inset 0 -2px #f8f9fa; }
.clip i { position: absolute; height: 6px; margin-top: -1px; background: #696c70; }
.open {
  height: 126px; margin-top: 2px; border-color: #7d7f80; box-shadow: none;
  background: linear-gradient(90deg, #26394b 2px, transparent 2px 77px, #26394b 77px 79px, transparent 79px 153px, #26394b 153px 155px, transparent 155px 230px, #26394b 230px 232px, transparent 232px) 9px 0 / 306px 100% repeat-x #182027;
}
.open i { background: #a9acb0; }
.hrow { display: flex; gap: 6px; height: 24px; }
.hscroll { flex: 1; display: flex; align-items: center; padding: 0 8px 0 6px; gap: 10px; background: #464749; border-radius: 4px; color: #f2f3f3; }
.htrack { flex: 1; height: 16px; padding-left: 14px; border-radius: 4px; background: #595c5d; }
.htrack span { display: block; width: 56px; height: 16px; border-radius: 5px; background: #f2f3f3; }
.cl { transform: rotate(-90deg); }
.cr { transform: rotate(90deg); }
.flip { transform: rotate(180deg); }
.mini { width: 24px; height: 24px; border-radius: 4px; background: #464749; color: #f2f3f3; }
.tall { height: 44px; border: 2px solid #595c5e; }
.hzoom { display: flex; align-items: center; justify-content: space-between; width: 168px; padding: 0 6px; background: #464749; border-radius: 4px; color: #f2f3f3; }
.zoom { appearance: none; background: none; width: 104px; height: 16px; }
.zoom::-webkit-slider-runnable-track { height: 5px; border-radius: 2px; background: #77797b; }
.zoom::-webkit-slider-thumb { appearance: none; width: 16px; height: 16px; margin-top: -6px; border-radius: 50%; background: #fff; }
.vert { writing-mode: vertical-lr; direction: rtl; width: 16px; height: 104px; }
.vert::-webkit-slider-runnable-track { width: 5px; height: auto; }
.vert::-webkit-slider-thumb { margin: 0 0 0 -6px; }
.vcol { display: flex; flex-direction: column; gap: 6px; width: 24px; }
.vbox { display: flex; flex-direction: column; align-items: center; justify-content: space-between; background: #464749; border-radius: 4px; color: #f2f3f3; }
.v1 { height: 96px; padding: 10px 0 4px; }
.v1 .vert { height: 82px; }
.v2 { height: 126px; padding: 6px 0 8px; }
.v3 { height: 168px; padding: 6px 0; }

/* Mixer */
.mixer { flex: 1; display: flex; flex-direction: column; margin-top: 12px; padding: 14px; background: #222629; border: 2px solid #393c3e; border-bottom: 0; border-radius: 6px 6px 0 0; }
.mixbar { display: flex; padding: 0 0 8px 8px; border-bottom: 2px solid #4e5153; }
.mixtools, .mixright { display: flex; gap: 10px; margin-left: auto; }
.mbtn, .mgroup { height: 50px; border: 2px solid #595c5e; border-radius: 6px; background: #464749; overflow: hidden; }
.w50 { width: 50px; }
.w126 { width: 126px; font-size: 26px; }
.mgroup { display: flex; }
.mgroup button { width: 49px; }
.mgroup output { width: 76px; text-align: center; font-size: 24px; line-height: 46px; background: #1a1d1e; }
.deep { background: #1a1d1e; }
.mgroup .deep { background: #1a1d1e; }
.mixright .mgroup button { width: 48px; }
.mixmain { flex: 1; display: flex; gap: 4px; padding-top: 8px; }
.desk { flex: 1; min-width: 0; display: flex; flex-direction: column; }
.racks, .channels { display: flex; }
.racks { height: 40px; }
.strip { width: 182px; border-right: 2px solid #000; }
.strip.in { margin-right: 26px; }
.strip.lead { width: 184px; border-left: 2px solid #000; }
.strip.out { margin: 0 28px 0 auto; }
.strip.sel { background: #9a9b9e; }
.rout { width: calc(100% - 4px); height: 38px; margin: 0 2px; padding: 0 6px 0 8px; border: 2px solid #131617; border-radius: 6px; background: #515254; color: #b9bbbc; font-size: 23px; font-weight: bold; }
.sel .rout { background: #7e8080; border-color: #595b5b; color: #191919; }
.hsplit { display: flex; gap: 4px; height: 4px; margin: 2px 0; }
.hsplit span { flex: 1; background: #737576; }
.hsplit b { width: 8px; background: #d6d8d8; }
.channels .strip { display: flex; flex-direction: column; padding-top: 4px; }
.quad { display: grid; grid-template-columns: 1fr 1fr; grid-auto-rows: 35px; gap: 2px; margin: 0 6px; padding: 2px; border-radius: 6px; background: #131617; color: #b2b4b6; font-size: 24px; font-weight: bold; overflow: hidden; }
.quad > * { background: #2c3033; padding-right: 2px; }
.quad .armed { background: #e23737; color: #330b0b; }
.sel .quad { background: #585a5a; color: #191919; }
.sel .quad > :not(.armed) { background: #8b8d8d; }
.panbox { display: flex; flex-direction: column; align-items: center; gap: 5px; height: 36px; margin: 11px 7px 14px; padding-top: 5px; border: 1px solid #17191a; border-radius: 5px; background: #1c1f1e; color: #e2e6ea; font-size: 18px; line-height: 18px; font-weight: bold; }
.panbox b { width: 8px; height: 4px; background: #fff; }
.faders { display: flex; gap: 6px; margin: 0 7px; }
.fader, .vu { display: grid; flex: 1; height: 160px; border-radius: 5px; background: #1c1f1e; font-size: 16px; }
.fader > *, .vu > * { grid-area: 1 / 1; }
.ticks { width: 80px; height: 160px; }
.scale li { height: 16px; line-height: 16px; }
.fader .scale { padding: 10px 4px 0 0; text-align: right; color: #aab2bd; font-weight: bold; }
.fader li:nth-child(2) { margin-top: 10px; }
.fader li:nth-child(3) { margin-top: 7px; }
.fader li:nth-child(4) { margin-top: 2px; }
.fader li:nth-child(5) { margin-top: -2px; }
.fader li:nth-child(6) { margin-top: -6px; }
.fader li:nth-child(7) { margin-top: -2px; }
.fader li:nth-child(8) { margin-top: 1px; }
.vu .scale { padding: 19px 0 0 2px; text-align: center; color: #74777a; font-weight: bold; }
.vu li:nth-child(2), .vu li:nth-child(5) { margin-top: -1px; }
.vu li:nth-child(6) { margin-top: -3px; }
.vu li:nth-child(7) { margin-top: 3px; }
.cap { appearance: none; background: none; writing-mode: vertical-lr; direction: rtl; width: 20px; height: 136px; margin: 0 0 0 4px; align-self: center; }
.cap::-webkit-slider-thumb { appearance: none; width: 20px; height: 46px; border-radius: 2px; box-shadow: 0 3px 5px #0008; background: linear-gradient(#8d8f91 6px, #b9babb 6px 11px, #929394 11px 12px, #c6c7c8 12px 16px, #98999a 16px 17px, #c6c7c8 17px 22px, #222 22px 24px, #d6d7d8 24px 28px, #a4a5a6 28px 29px, #dcdddd 29px 34px, #a4a5a6 34px 35px, #e3e3e4 35px 40px, #747678 40px); }
.red::-webkit-slider-thumb { background: linear-gradient(#a01414 6px, #f04a4a 6px 11px, #c22222 11px 12px, #e83434 12px 16px, #c22222 16px 17px, #e83434 17px 22px, #330b0b 22px 24px, #f05555 24px 28px, #c93030 28px 29px, #f05a5a 29px 34px, #c93030 34px 35px, #f27272 35px 40px, #7a1010 40px); }
.sel .fader, .sel .vu, .sel .panbox { background: #353737; }
.vals { display: grid; grid-template-columns: 1fr 1fr; gap: 2px; height: 38px; margin: 11px 6px 10px; padding: 2px; border-radius: 6px; overflow: hidden; background: #131617; color: #b2b4b6; line-height: 34px; text-align: center; }
.vals output { background: #222629; padding-right: 2px; }
.vals output + output { background: #3c3d3f; }
.sel .vals { background: #585a5a; color: #191919; }
.sel .vals output { background: #939595; }
.sel .vals output + output { background: #828484; }
.ident { display: flex; align-items: center; justify-content: space-between; height: 52px; padding: 2px 14px 0 11px; color: #b2b4b6; font-size: 26px; }
.sel .ident { color: #191919; }
h3 { height: 68px; padding-left: 7px; background: #68696b; color: #f2f3f3; font-size: 26px; font-weight: normal; line-height: 58px; }
.sel h3 { background: #e8e9e9; color: #111; border-bottom: 12px solid #68696b; }
.deskscroll { display: flex; align-items: center; height: 24px; margin-top: 4px; padding: 0 7px; border-radius: 4px; background: #464748; color: #77797b; }
.vscroll { display: flex; flex-direction: column; align-items: center; gap: 12px; width: 24px; margin-bottom: 28px; padding: 6px 0 7px; border-radius: 4px; background: #464748; color: #f2f3f3; }
.vtrack { flex: 1; width: 16px; border-radius: 5px; background: #595c5d; }
.vtrack span { display: block; height: 56px; border-radius: 5px; background: #f2f3f3; }

/* Transport */
.transport { display: flex; align-items: center; height: 80px; padding: 0 0 0 2px; background: #222629; border-bottom: 2px solid #393c3e; border-radius: 0 0 20px 20px; color: #d6d8d8; }
.box, .locator { height: 50px; border: 2px solid #595c5e; border-radius: 6px; background: #1a1d1e; }
.gray { background: #464749; }
.box.w50 { padding-right: 3px; }
.w88 { width: 88px; margin-left: 10px; padding-right: 4px; gap: 16px; }
.dots { width: 6px; height: 30px; margin: 0 2px 0 4px; background: repeating-linear-gradient(#d6d8d8 0 6px, transparent 6px 12px); }
.aq { width: 76px; margin-left: 10px; font-size: 26px; }
.locator { display: flex; width: 300px; margin-left: 20px; overflow: hidden; }
.locator.left { margin-left: 122px; }
.locator button { width: 48px; background: #464749; }
.locator .deep { background: #1a1d1e; }
.locator .lit { background: #d6d8d8; color: #222; }
.locator output { flex: 1; display: flex; align-items: center; justify-content: flex-end; padding-right: 12px; border-left: 2px solid #595c5e; font-size: 30px; }
.locator .s { width: 12px; }
.locator .m { width: 27px; }
.locator .l { width: 46px; }
.punch { width: 100px; margin-left: 10px; gap: 20px; }
.keysbox { display: flex; width: 400px; height: 64px; margin-left: 10px; border: 4px solid #b9bbbc; border-radius: 8px; background: #66686a; color: #dfe1e1; }
.keysbox button { flex: 1; }
.keysbox .active { background: #a2a7ab; color: #222; }
.retro { width: 76px; margin-left: 10px; color: #808284; }
.locator.time { margin-left: 10px; }
.locator.tempo { width: 364px; margin-left: 10px; }
.tempo output { font-size: 26px; border-right: 2px solid #595c5e; border-left: 0; padding-right: 7px; gap: 12px; }
.locator .tap { width: 100px; font-size: 24px; }
.locator.click { width: 88px; margin-left: auto; }
.locator .set { width: 38px; }
.locator.load { width: 178px; margin-left: 10px; }
.load span { flex: 1; }
.load span:first-child { flex: none; width: 52px; border-right: 2px solid #595c5e; }
.dots.last { margin-right: 1px; }
```
